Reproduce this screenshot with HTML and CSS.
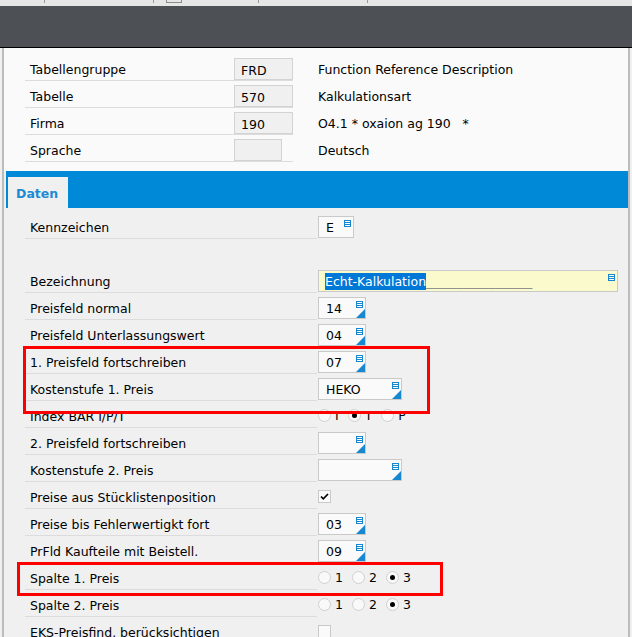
FILE: index.html
```html
<!DOCTYPE html>
<html lang="de">
<head>
    <meta charset="UTF-8">
    <meta name="viewport" content="width=device-width, initial-scale=1.0">
    <title>Kalkulationsart</title>
    <link rel="stylesheet" href="styles.css">
</head>
<body>
    <div class="topstrip">
        <span class="tick t1"></span>
        <span class="tick t2"></span>
        <span class="mini"></span>
        <span class="tick t3"></span>
        <span class="tick t4"></span>
    </div>
    <div class="appbar"></div>

    <div class="frame">
        <div class="head">
            <div class="hrow">
                <span class="hlabel">Tabellengruppe</span>
                <span class="hcell"><span class="hbox">FRD</span></span>
                <span class="hdesc">Function Reference Description</span>
            </div>
            <div class="hrow">
                <span class="hlabel">Tabelle</span>
                <span class="hcell"><span class="hbox">570</span></span>
                <span class="hdesc">Kalkulationsart</span>
            </div>
            <div class="hrow">
                <span class="hlabel">Firma</span>
                <span class="hcell"><span class="hbox">190</span></span>
                <span class="hdesc">O4.1 * oxaion ag 190 &nbsp;&nbsp;*</span>
            </div>
            <div class="hrow">
                <span class="hlabel">Sprache</span>
                <span class="hcell"><span class="hbox short"></span></span>
                <span class="hdesc">Deutsch</span>
            </div>
        </div>

        <div class="tabbar"><div class="tab">Daten</div></div>

        <div class="content">
            <div class="row">
                <span class="lab">Kennzeichen</span>
                <span class="fld"><span class="box w36">E<i class="ico"></i></span></span>
            </div>
            <div class="row blank"></div>
            <div class="row">
                <span class="lab">Bezeichnung</span>
                <span class="fld"><span class="box w300 yellow"><span class="sel">Echt-Kalkulation</span><span class="fill">_________________</span><i class="ico"></i></span></span>
            </div>
            <div class="row">
                <span class="lab">Preisfeld normal</span>
                <span class="fld"><span class="box w48">14<i class="ico"></i><i class="tri"></i></span></span>
            </div>
            <div class="row">
                <span class="lab">Preisfeld Unterlassungswert</span>
                <span class="fld"><span class="box w48">04<i class="ico"></i><i class="tri"></i></span></span>
            </div>
            <div class="mark">
                <div class="row">
                    <span class="lab">1. Preisfeld fortschreiben</span>
                    <span class="fld"><span class="box w48">07<i class="ico"></i><i class="tri"></i></span></span>
                </div>
                <div class="row">
                    <span class="lab">Kostenstufe 1. Preis</span>
                    <span class="fld"><span class="box w84">HEKO<i class="ico"></i><i class="tri"></i></span></span>
                </div>
            </div>
            <div class="row">
                <span class="lab">Index BAR I/P/T</span>
                <span class="fld radios">
                    <label class="radio"><i class="dot"></i>I</label>
                    <label class="radio"><i class="dot on"></i>T</label>
                    <label class="radio"><i class="dot"></i>P</label>
                </span>
            </div>
            <div class="row">
                <span class="lab">2. Preisfeld fortschreiben</span>
                <span class="fld"><span class="box w48"><i class="ico"></i><i class="tri"></i></span></span>
            </div>
            <div class="row">
                <span class="lab">Kostenstufe 2. Preis</span>
                <span class="fld"><span class="box w84"><i class="ico"></i><i class="tri"></i></span></span>
            </div>
            <div class="row">
                <span class="lab">Preise aus Stücklistenposition</span>
                <span class="fld check-cell">
                    <span class="check"><svg width="11" height="11" viewBox="0 0 11 11"><path d="M2 5.5 L4.3 7.8 L9 3" fill="none" stroke="#000" stroke-width="1.7"/></svg></span>
                </span>
            </div>
            <div class="row">
                <span class="lab">Preise bis Fehlerwertigkt fort</span>
                <span class="fld"><span class="box w48">03<i class="ico"></i><i class="tri"></i></span></span>
            </div>
            <div class="row">
                <span class="lab">PrFld Kaufteile mit Beistell.</span>
                <span class="fld"><span class="box w48">09<i class="ico"></i><i class="tri"></i></span></span>
            </div>
            <div class="row mark2">
                <span class="lab">Spalte 1. Preis</span>
                <span class="fld radios">
                    <label class="radio"><i class="dot"></i>1</label>
                    <label class="radio"><i class="dot"></i>2</label>
                    <label class="radio"><i class="dot on"></i>3</label>
                </span>
            </div>
            <div class="row">
                <span class="lab">Spalte 2. Preis</span>
                <span class="fld radios">
                    <label class="radio"><i class="dot"></i>1</label>
                    <label class="radio"><i class="dot"></i>2</label>
                    <label class="radio"><i class="dot on"></i>3</label>
                </span>
            </div>
            <div class="row">
                <span class="lab">EKS-Preisfind. berücksichtigen</span>
                <span class="fld check-cell"><span class="check"></span></span>
            </div>
        </div>
    </div>
</body>
</html>
```

FILE: styles.css
```css
:root {
    --blue: #0089d6;
    --line: #dcdcdc;
    --field: #c9c9c9;
}

* {
    box-sizing: border-box;
}

html, body {
    height: 100%;
    overflow: hidden;
}

body {
    margin: 0;
    font-family: "DejaVu Sans", Verdana, sans-serif;
    font-size: 12.5px;
    color: #000;
    background-color: #f0f0f0;
}

/* window chrome */
.topstrip {
    height: 6px;
    background-color: #e6e6e6;
    display: flex;
    align-items: flex-start;
}
.tick {
    width: 1px;
    height: 3px;
    background-color: #9a9a9a;
}
.t1 { margin-left: 44px; }
.t2 { margin-left: 108px; }
.t3 { margin-left: 76px; }
.t4 { margin-left: 108px; }
.mini {
    margin-left: 12px;
    width: 16px;
    height: 3px;
    border: 1px solid #8c8c8c;
    border-top: none;
}
.appbar {
    height: 42px;
    background-color: #4d5156;
    border-bottom: 1px solid #000;
}

.frame {
    margin: 0 2px 0 2px;
    border-left: 2px solid #bcbcbc;
    border-right: 2px solid #bcbcbc;
    height: 100%;
}

/* header block */
.head {
    background-color: #fafafa;
    padding: 6px 0 9px 21px;
}
.hrow {
    display: flex;
    height: 27px;
}
.hlabel {
    width: 209px;
    padding: 6px 0 0 5px;
    line-height: 20px;
    border-bottom: 1px solid var(--line);
}
.hcell {
    width: 59px;
    padding-top: 4px;
    border-bottom: 1px solid var(--line);
}
.hbox {
    display: block;
    width: 59px;
    height: 22px;
    background-color: #f0f0f0;
    border: 1px solid #d3d3d3;
    padding: 2px 0 0 6px;
    line-height: 19px;
}
.hbox.short {
    width: 48px;
}
.hdesc {
    padding: 6px 0 0 25px;
    line-height: 20px;
}

/* tab strip */
.tabbar {
    margin-left: 2px;
    height: 37px;
    background-color: var(--blue);
    display: flex;
    align-items: flex-end;
}
.tab {
    margin-left: 2px;
    height: 31px;
    padding: 2px 10px 0 8px;
    background-color: #f0f0f0;
    color: #1c8ad4;
    font-weight: bold;
    line-height: 29px;
}

/* form rows */
.content {
    padding: 4px 0 0 21px;
}
.row {
    display: flex;
    height: 27px;
}
.lab {
    width: 292px;
    height: 27px;
    padding: 6px 0 0 5px;
    line-height: 20px;
    border-bottom: 1px solid var(--line);
}
.fld {
    margin-left: 1px;
    padding-top: 4px;
}
.box {
    position: relative;
    display: block;
    height: 22px;
    background-color: #fafafa;
    border: 1px solid var(--field);
    padding: 1px 0 0 7px;
    line-height: 20px;
    white-space: nowrap;
}
.w36 { width: 36px; }
.w48 { width: 48px; }
.w84 { width: 84px; }
.w300 { width: 300px; }
.yellow {
    background-color: #fafacc;
    padding-left: 6px;
}
.sel {
    background-color: #0078d7;
    color: #fff;
    padding: 1px 0;
}
.fill {
    color: #8a8a8a;
}
.ico {
    position: absolute;
    top: 3px;
    right: 2px;
    width: 7px;
    height: 7px;
    border: 1px solid #1787d0;
    background: linear-gradient(#fff 0 1px, #1787d0 1px 2px, #fff 2px 3px, #1787d0 3px 4px, #fff 4px);
}
.tri {
    position: absolute;
    right: 0;
    bottom: 0;
    width: 9px;
    height: 9px;
    background-color: #1787d0;
    clip-path: polygon(100% 0, 100% 100%, 0 100%);
}

.radios {
    display: flex;
    align-items: center;
    padding-top: 2px;
    height: 27px;
    gap: 9px;
}
.radio {
    display: flex;
    align-items: center;
    gap: 4px;
}
.dot {
    width: 13px;
    height: 13px;
    border-radius: 50%;
    border: 1px solid #d0d0d0;
    background-color: #f9f9f9;
    display: flex;
    align-items: center;
    justify-content: center;
}
.dot.on::after {
    content: "";
    width: 5px;
    height: 5px;
    border-radius: 50%;
    background-color: #000;
}

.check-cell {
    display: flex;
    align-items: center;
    height: 27px;
    padding-top: 2px;
}
.check {
    width: 13px;
    height: 13px;
    border: 1px solid var(--field);
    background-color: #fafafa;
    display: flex;
    align-items: center;
    justify-content: center;
}

/* red annotation frames */
.mark {
    position: relative;
}
.mark::after {
    content: "";
    position: absolute;
    left: -2px;
    top: -1px;
    width: 401px;
    height: 62px;
    border: 3px solid #f00;
    pointer-events: none;
}
.mark2 {
    position: relative;
}
.mark2::after {
    content: "";
    position: absolute;
    left: -8px;
    top: -1px;
    width: 420px;
    height: 28px;
    border: 3px solid #f00;
    pointer-events: none;
}
```
